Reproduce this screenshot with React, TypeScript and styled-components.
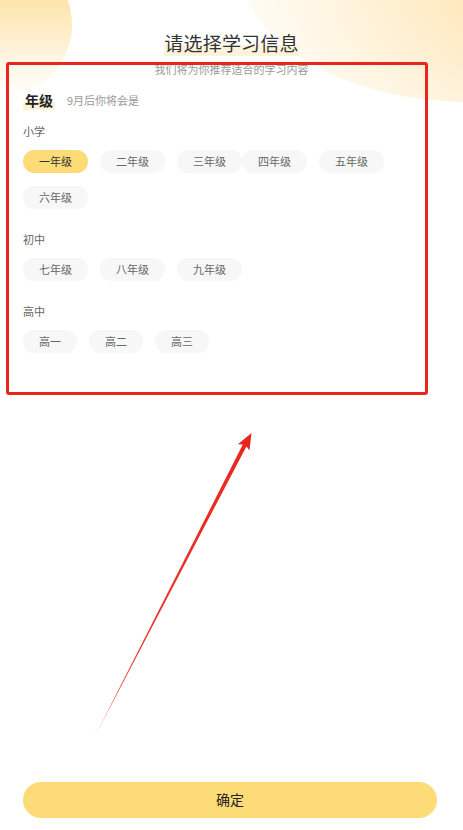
import React from "react";
import styled, { createGlobalStyle } from "styled-components";

const GlobalStyle = createGlobalStyle`
  html, body { margin: 0; padding: 0; background: #ffffff; }
  body { font-family: "Noto Sans CJK SC", "Noto Sans", sans-serif; }
  * { box-sizing: border-box; }
`;

const Page = styled.div`
  position: relative;
  width: 463px;
  min-height: 830px;
  overflow: hidden;
  background: #ffffff;
  display: flex;
  flex-direction: column;
  padding: 30px 23px 12px;
`;

const BlobLeft = styled.div`
  position: absolute;
  left: -72px;
  top: -47px;
  width: 144px;
  height: 144px;
  border-radius: 50%;
  background: linear-gradient(180deg, #fddc8c 0%, #fde6b0 38%, #fff3dc 68%, #ffffff 100%);
  z-index: 0;
`;

const BlobRight = styled.div`
  position: absolute;
  left: 238px;
  top: -180px;
  width: 460px;
  height: 282px;
  border-radius: 50%;
  background: radial-gradient(ellipse 80% 70% at 78% 60%, #fddf9c 0%, #fde7b8 30%, #feefd0 55%, #fff6e6 78%, #fffdf8 100%);
  z-index: 0;
`;

const Content = styled.div`
  position: relative;
  z-index: 1;
  display: flex;
  flex-direction: column;
`;

const TitleRow = styled.div`
  display: flex;
  justify-content: center;
`;

const Title = styled.h1`
  margin: 0;
  font-size: 19px;
  line-height: 26px;
  font-weight: 400;
  color: #333333;
  letter-spacing: 0.2px;
  background: linear-gradient(180deg, transparent 0%, transparent 58%, #fdf3da 58%, #fdf3da 100%);
`;

const Subtitle = styled.p`
  margin: 5px 0 0;
  text-align: center;
  font-size: 11px;
  line-height: 16px;
  color: #9a9a9a;
`;

const Header = styled.div`
  margin-top: 13px;
  display: flex;
  align-items: center;
  gap: 12px;
  height: 20px;
`;

const HeaderTitle = styled.span`
  font-size: 14px;
  line-height: 20px;
  font-weight: 700;
  color: #222222;
  padding: 0 2px;
  background: linear-gradient(180deg, transparent 0%, transparent 62%, #fdf2d8 62%, #fdf2d8 100%);
`;

const HeaderHint = styled.span`
  font-size: 11px;
  line-height: 16px;
  color: #999999;
`;

const Section = styled.section<{ $first?: boolean }>`
  margin-top: ${(p) => (p.$first ? "13px" : "22px")};
  display: flex;
  flex-direction: column;
`;

const SectionLabel = styled.div`
  font-size: 11px;
  line-height: 16px;
  color: #666666;
`;

const ChipGrid = styled.div`
  margin-top: 11px;
  display: flex;
  flex-wrap: wrap;
  column-gap: 12px;
  row-gap: 13px;
`;

const Chip = styled.button<{ $active?: boolean; $wide?: boolean; $tight?: boolean }>`
  appearance: none;
  border: none;
  margin: 0 0 0 ${(p) => (p.$tight ? "-12px" : "0")};
  height: 23px;
  width: ${(p) => (p.$wide ? "65px" : "54px")};
  border-radius: 12px;
  padding: 0;
  display: flex;
  align-items: center;
  justify-content: center;
  font-family: "Noto Sans CJK SC", sans-serif;
  font-size: 11px;
  line-height: 1;
  color: ${(p) => (p.$active ? "#333333" : "#666666")};
  background: ${(p) => (p.$active ? "#fddc78" : "#f7f7f7")};
`;

const Spacer = styled.div`
  flex: 1;
`;

const ConfirmButton = styled.button`
  appearance: none;
  border: none;
  width: 414px;
  height: 36px;
  border-radius: 18px;
  background: #fddc78;
  color: #222222;
  font-family: "Noto Sans CJK SC", sans-serif;
  font-size: 14px;
  line-height: 1;
  padding: 0 0 2px;
  display: flex;
  align-items: center;
  justify-content: center;
  position: relative;
  z-index: 1;
`;

const AnnotationBox = styled.div`
  position: absolute;
  left: 6px;
  top: 62px;
  width: 422px;
  height: 333px;
  border: 3px solid #e8261d;
  border-radius: 3px;
  z-index: 2;
  pointer-events: none;
`;

const ArrowLayer = styled.svg`
  position: absolute;
  left: 0;
  top: 0;
  z-index: 2;
  pointer-events: none;
`;

type Grade = { label: string; active?: boolean; tight?: boolean };

const sections: { name: string; wide: boolean; grades: Grade[] }[] = [
  {
    name: "小学",
    wide: true,
    grades: [
      { label: "一年级", active: true },
      { label: "二年级" },
      { label: "三年级" },
      { label: "四年级", tight: true },
      { label: "五年级" },
      { label: "六年级" },
    ],
  },
  {
    name: "初中",
    wide: true,
    grades: [{ label: "七年级" }, { label: "八年级" }, { label: "九年级" }],
  },
  {
    name: "高中",
    wide: false,
    grades: [{ label: "高一" }, { label: "高二" }, { label: "高三" }],
  },
];

export default function App() {
  return (
    <>
      <GlobalStyle />
      <Page>
        <BlobLeft />
        <BlobRight />
        <Content>
          <TitleRow>
            <Title>请选择学习信息</Title>
          </TitleRow>
          <Subtitle>我们将为你推荐适合的学习内容</Subtitle>
          <Header>
            <HeaderTitle>年级</HeaderTitle>
            <HeaderHint>9月后你将会是</HeaderHint>
          </Header>
          {sections.map((s, i) => (
            <Section key={s.name} $first={i === 0}>
              <SectionLabel>{s.name}</SectionLabel>
              <ChipGrid>
                {s.grades.map((g) => (
                  <Chip key={g.label} $active={g.active} $wide={s.wide} $tight={g.tight}>
                    {g.label}
                  </Chip>
                ))}
              </ChipGrid>
            </Section>
          ))}
        </Content>
        <Spacer />
        <ConfirmButton>确定</ConfirmButton>
        <AnnotationBox />
        <ArrowLayer width="463" height="830" viewBox="0 0 463 830">
          <defs>
            <linearGradient id="arrowFade" x1="92" y1="742" x2="251" y2="433" gradientUnits="userSpaceOnUse">
              <stop offset="0" stopColor="#e8261d" stopOpacity="0.25" />
              <stop offset="0.15" stopColor="#e8261d" stopOpacity="0.9" />
              <stop offset="1" stopColor="#e8261d" />
            </linearGradient>
          </defs>
          <polygon
            points="92,742 246.4,446.4 249.5,450.2 251.5,433 237.9,444.2 242.8,444.5"
            fill="url(#arrowFade)"
          />
        </ArrowLayer>
      </Page>
    </>
  );
}
